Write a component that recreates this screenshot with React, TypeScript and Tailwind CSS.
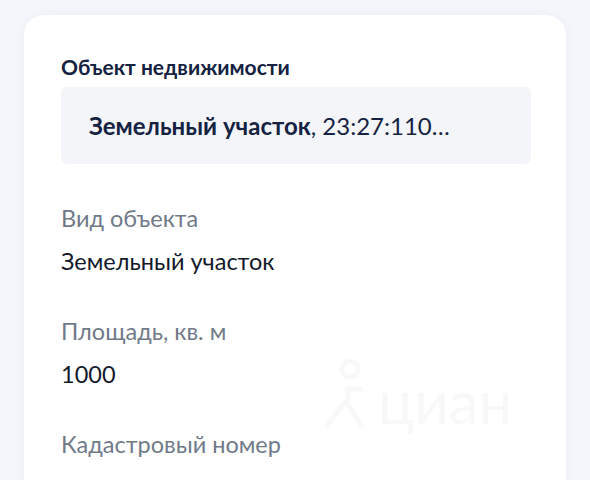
import React from 'react';

const rows = [
    { label: 'Вид объекта', value: 'Земельный участок' },
    { label: 'Площадь, кв. м', value: '1000' },
    { label: 'Кадастровый номер', value: '' },
];

// Бледный водяной знак поверх карточки
const Watermark: React.FC = () => (
    <div className="pointer-events-none absolute left-[298px] top-[340px] flex items-end opacity-[0.025]">
        <svg width="44" height="76" viewBox="0 0 44 76" fill="none" stroke="#152242" strokeWidth="5">
            <circle cx="28" cy="14" r="8" />
            <path d="M4 72 L24 46 L40 72" />
            <path d="M26 46 L26 34 L40 34" />
        </svg>
        <span className="ml-[12px] text-[60px] leading-[60px] text-[#152242]">циан</span>
    </div>
);

export default function App() {
    return (
        <div className="min-h-screen bg-[#f4f6fb] pt-[15px] pl-[24px] font-['Lato','Noto_Sans',sans-serif]">
            <div className="relative h-[500px] w-[542px] rounded-t-[20px] bg-white px-[37px] pt-[40px] shadow-[0_0_12px_rgba(21,34,66,0.04)]">
                <h3 className="text-[21px] font-bold leading-[24px] text-[#152242]">Объект недвижимости</h3>
                <div className="mt-[8px] flex h-[77px] w-[470px] items-center rounded-[6px] bg-[#f3f5f9] px-[28px] text-[24px] text-[#152242]">
                    <span className="truncate">
                        <span className="font-bold">Земельный участок</span>, 23:27:110…
                    </span>
                </div>

                <div className="mt-[40px] flex flex-col gap-[42px]">
                    {rows.map((row) => (
                        <div key={row.label} className="flex flex-col gap-[15px]">
                            <span className="text-[23.5px] leading-[28px] text-[#707a89]">{row.label}</span>
                            {row.value && (
                                <span className="text-[23.5px] leading-[28px] text-[#121a2b]">{row.value}</span>
                            )}
                        </div>
                    ))}
                </div>
                <Watermark />
            </div>
        </div>
    );
}
